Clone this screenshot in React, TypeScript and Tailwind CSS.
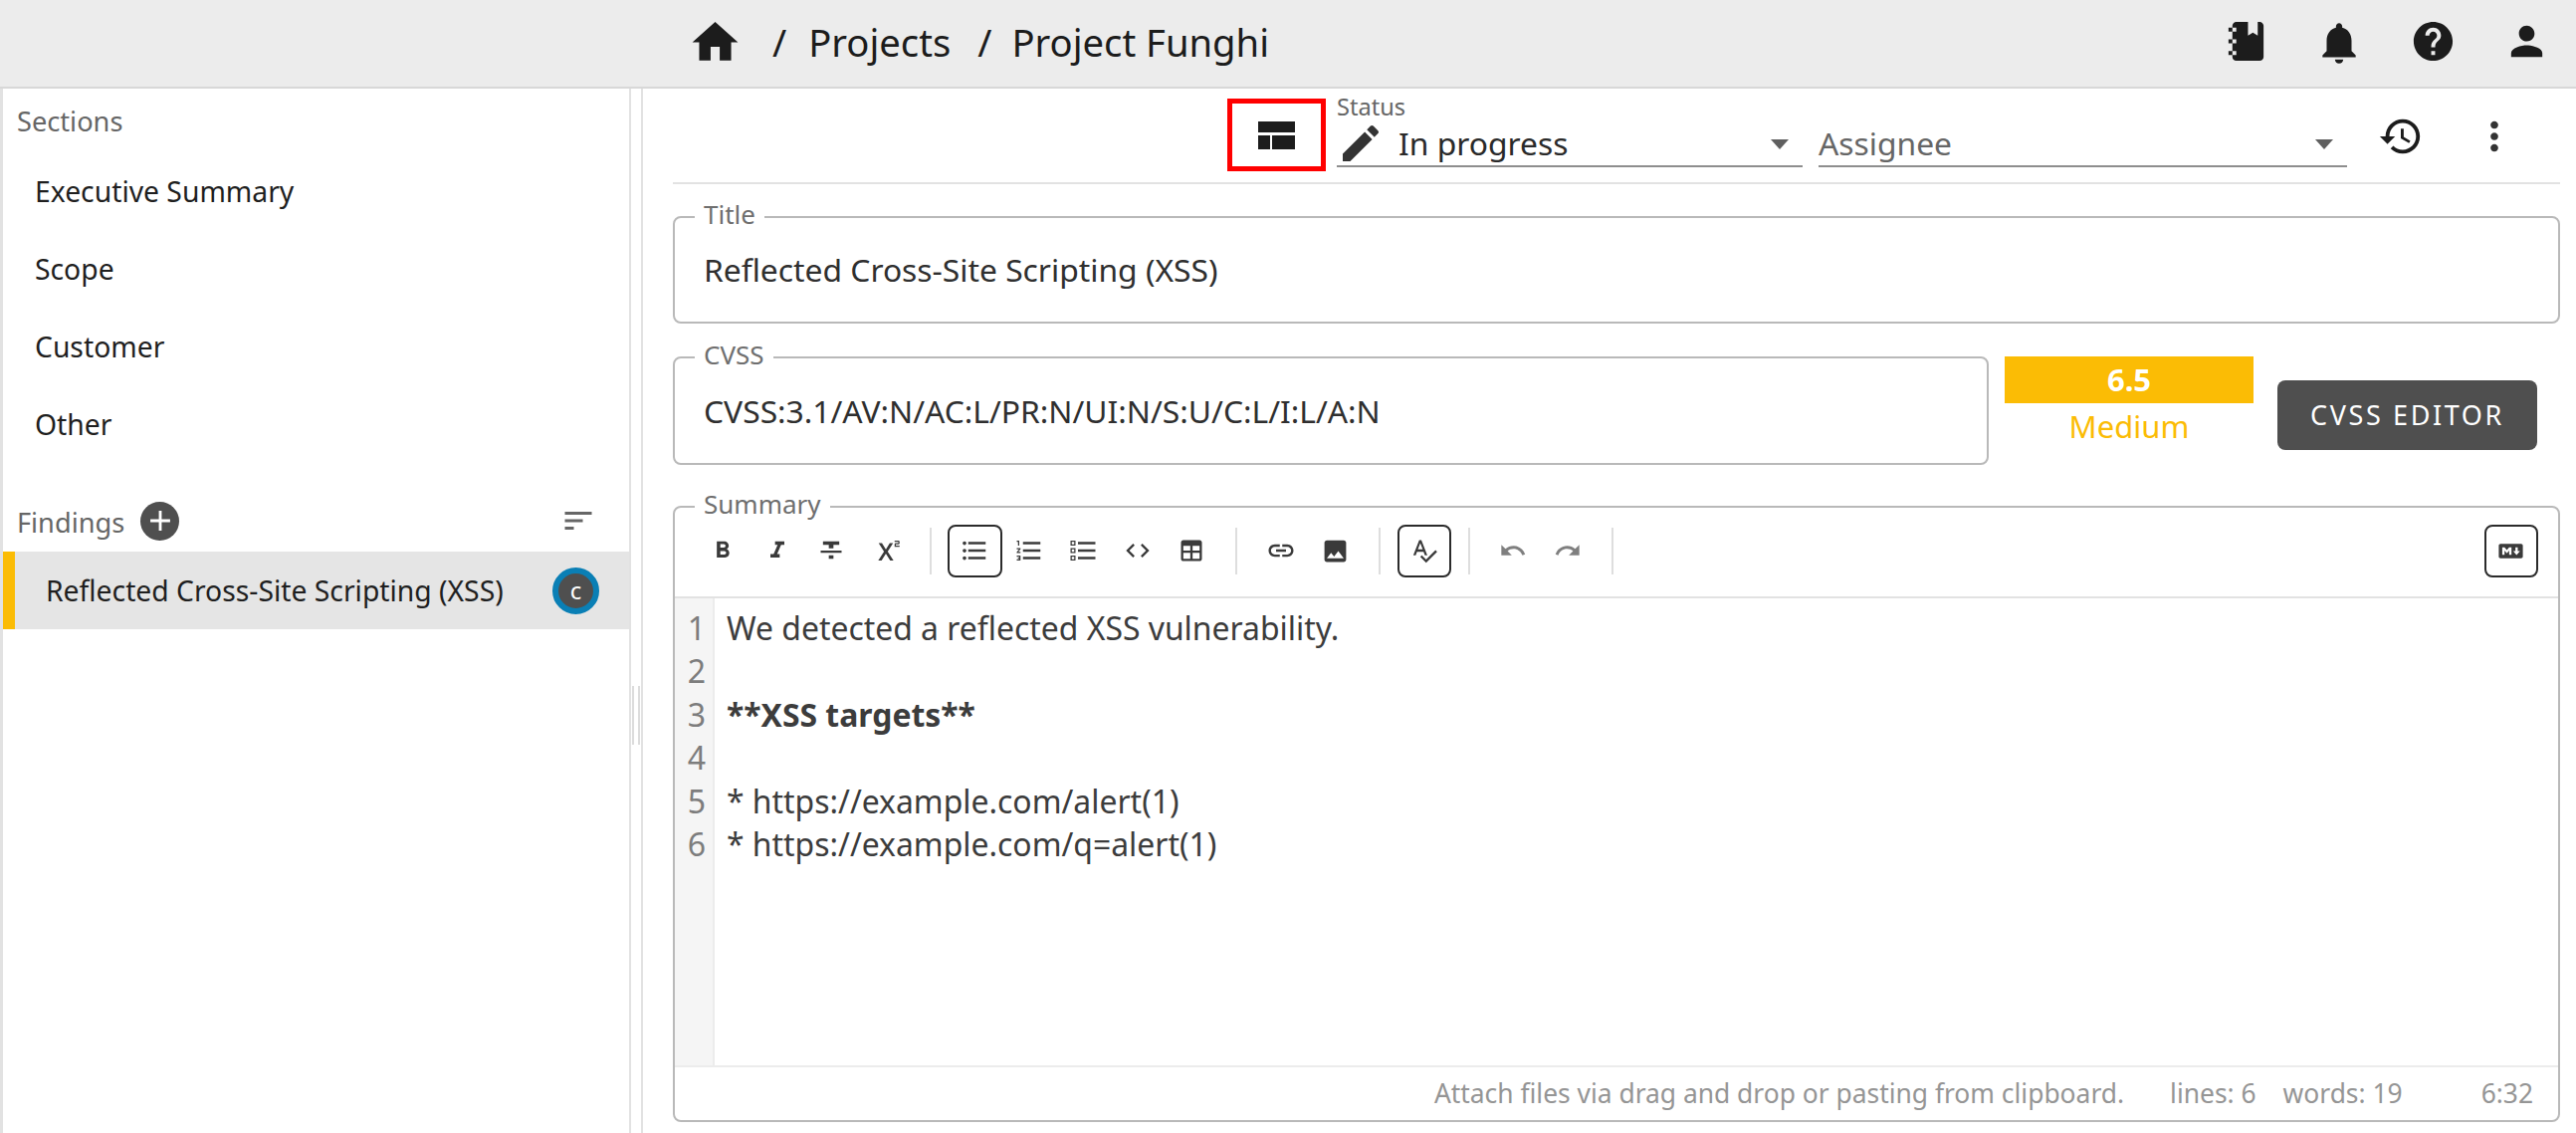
const ICONS = {
  home: "M10 20v-6h4v6h5v-8h3L12 3 2 12h3v8z",
  notebook:
    "M3,7V5H5V4C5,2.89 5.9,2 7,2H13V9L15.5,7.5L18,9V2H19C20.05,2 21,2.95 21,4V20C21,21.05 20.05,22 19,22H7C5.95,22 5,21.05 5,20V19H3V17H5V13H3V11H5V7H3M7,11H5V13H7V11M7,7V5H5V7H7M7,19V17H5V19H7Z",
  bell: "M12 22c1.1 0 2-.9 2-2h-4c0 1.1.9 2 2 2zm6-6v-5c0-3.07-1.63-5.64-4.5-6.32V4c0-.83-.67-1.5-1.5-1.5s-1.5.67-1.5 1.5v.68C7.64 5.36 6 7.92 6 11v5l-2 2v1h16v-1l-2-2z",
  help: "M12 2C6.48 2 2 6.48 2 12s4.48 10 10 10 10-4.48 10-10S17.52 2 12 2zm1 17h-2v-2h2v2zm2.07-7.75l-.9.92C13.45 12.9 13 13.5 13 15h-2v-.5c0-1.1.45-2.1 1.17-2.83l1.24-1.26c.37-.36.59-.86.59-1.41 0-1.1-.9-2-2-2s-2 .9-2 2H8c0-2.21 1.79-4 4-4s4 1.79 4 4c0 .88-.36 1.68-.93 2.25z",
  person:
    "M12 12c2.21 0 4-1.79 4-4s-1.79-4-4-4-4 1.79-4 4 1.79 4 4 4zm0 2c-2.67 0-8 1.34-8 4v2h16v-2c0-2.66-5.33-4-8-4z",
  history:
    "M13 3c-4.97 0-9 4.03-9 9H1l3.89 3.89.07.14L9 12H6c0-3.87 3.13-7 7-7s7 3.13 7 7-3.13 7-7 7c-1.93 0-3.68-.79-4.94-2.06l-1.42 1.42C8.27 19.99 10.51 21 13 21c4.97 0 9-4.03 9-9s-4.03-9-9-9zm-1 5v5l4.28 2.54.72-1.21-3.5-2.08V8H12z",
  more: "M12 8c1.1 0 2-.9 2-2s-.9-2-2-2-2 .9-2 2 .9 2 2 2zm0 2c-1.1 0-2 .9-2 2s.9 2 2 2 2-.9 2-2-.9-2-2-2zm0 6c-1.1 0-2 .9-2 2s.9 2 2 2 2-.9 2-2-.9-2-2-2z",
  edit: "M3 17.25V21h3.75L17.81 9.94l-3.75-3.75L3 17.25zM20.71 7.04c.39-.39.39-1.02 0-1.41l-2.34-2.34c-.39-.39-1.02-.39-1.41 0l-1.83 1.83 3.75 3.75 1.83-1.83z",
  plus: "M19 13h-6v6h-2v-6H5v-2h6V5h2v6h6v2z",
  sort: "M3 18h6v-2H3v2zM3 6v2h18V6H3zm0 7h12v-2H3v2z",
  bold: "M15.6 10.79c.97-.67 1.65-1.77 1.65-2.79 0-2.26-1.75-4-4-4H7v14h7.04c2.09 0 3.71-1.7 3.71-3.79 0-1.52-.86-2.82-2.15-3.42zM10 6.5h3c.83 0 1.5.67 1.5 1.5s-.67 1.5-1.5 1.5h-3v-3zm3.5 9H10v-3h3.5c.83 0 1.5.67 1.5 1.5s-.67 1.5-1.5 1.5z",
  italic: "M10 4v3h2.21l-3.42 8H6v3h8v-3h-2.21l3.42-8H18V4z",
  strike: "M10 19h4v-3h-4v3zM5 4v3h5v3h4V7h5V4H5zM3 14h18v-2H3v2z",
  sup: "M22 7h-2v1h3v1h-4V7c0-.55.45-1 1-1h2V5h-3V4h3c.55 0 1 .45 1 1v1c0 .55-.45 1-1 1zM5.88 20h2.66l3.4-5.42h.12l3.4 5.42h2.66l-4.65-7.27L17.81 6h-2.68l-3.07 4.99h-.12L8.85 6H6.19l4.32 6.73L5.88 20z",
  ul: "M4 10.5c-.83 0-1.5.67-1.5 1.5s.67 1.5 1.5 1.5 1.5-.67 1.5-1.5-.67-1.5-1.5-1.5zm0-6c-.83 0-1.5.67-1.5 1.5S3.17 7.5 4 7.5 5.5 6.83 5.5 6 4.83 4.5 4 4.5zm0 12c-.83 0-1.5.68-1.5 1.5s.68 1.5 1.5 1.5 1.5-.68 1.5-1.5-.67-1.5-1.5-1.5zM7 19h14v-2H7v2zm0-6h14v-2H7v2zm0-8v2h14V5H7z",
  ol: "M2 17h2v.5H3v1h1v.5H2v1h3v-4H2v1zm1-9h1V4H2v1h1v3zm-1 3h1.8L2 13.1v.9h3v-1H3.2L5 10.9V10H2v1zm5-6v2h14V5H7zm0 14h14v-2H7v2zm0-6h14v-2H7v2z",
  task: "M2 4h4v4H2V4zm1 1v2h2V5H3zM2 10h4v4H2v-4zm1 1v2h2v-2H3zM2 16h4v4H2v-4zm1 1v2h2v-2H3zM8 5h14v2H8V5zm0 6h14v2H8v-2zm0 6h14v2H8v-2z",
  code: "M9.4 16.6L4.8 12l4.6-4.6L8 6l-6 6 6 6 1.4-1.4zm5.2 0l4.6-4.6-4.6-4.6L16 6l6 6-6 6-1.4-1.4z",
  table:
    "M5 3h14c1.1 0 2 .9 2 2v14c0 1.1-.9 2-2 2H5c-1.1 0-2-.9-2-2V5c0-1.1.9-2 2-2zm0 5v4h6V8H5zm8 0v4h6V8h-6zm-8 6v5h6v-5H5zm8 0v5h6v-5h-6z",
  link: "M3.9 12c0-1.71 1.39-3.1 3.1-3.1h4V7H7c-2.76 0-5 2.24-5 5s2.24 5 5 5h4v-1.9H7c-1.71 0-3.1-1.39-3.1-3.1zM8 13h8v-2H8v2zm9-6h-4v1.9h4c1.71 0 3.1 1.39 3.1 3.1s-1.39 3.1-3.1 3.1h-4V17h4c2.76 0 5-2.24 5-5s-2.24-5-5-5z",
  image:
    "M21 19V5c0-1.1-.9-2-2-2H5c-1.1 0-2 .9-2 2v14c0 1.1.9 2 2 2h14c1.1 0 2-.9 2-2zM8.5 13.5l2.5 3.01L14.5 12l4.5 6H5l3.5-4.5z",
  spell:
    "M12.45 16h2.09L9.43 3H7.57L2.46 16h2.09l1.12-3h5.64l1.14 3zm-6.02-5L8.5 5.48 10.57 11H6.43zm15.16.59l-8.09 8.09L9.83 16l-1.41 1.41 5.09 5.09L23 13l-1.41-1.41z",
  undo: "M12.5 8c-2.65 0-5.05.99-6.9 2.6L2 7v9h9l-3.62-3.62c1.39-1.16 3.16-1.88 5.12-1.88 3.54 0 6.55 2.31 7.6 5.5l2.37-.78C21.08 11.03 17.15 8 12.5 8z",
  redo: "M18.4 10.6C16.55 8.99 14.15 8 11.5 8c-4.65 0-8.58 3.03-9.96 7.22L3.9 16c1.05-3.19 4.05-5.5 7.6-5.5 1.95 0 3.73.72 5.12 1.88L13 16h9V7l-3.6 3.6z",
  markdown:
    "M20.56 18H3.44C2.65 18 2 17.37 2 16.59V7.41C2 6.63 2.65 6 3.44 6h17.12c.79 0 1.44.63 1.44 1.41v9.18c0 .78-.65 1.41-1.44 1.41M6.81 15.19v-3.66l1.92 2.35 1.92-2.35v3.66h1.93V8.81h-1.93l-1.92 2.35-1.92-2.35H4.89v6.38h1.92M19.69 12h-1.92V8.81h-1.92V12h-1.93l2.89 3.28L19.69 12z",
};

function Icon({ name, className }: { name: keyof typeof ICONS; className: string }) {
  return (
    <svg viewBox="0 0 24 24" fill="currentColor" fillRule="evenodd" className={className}>
      <path d={ICONS[name]} />
    </svg>
  );
}

function ToolButton({
  name,
  boxed,
  size,
  muted,
}: {
  name: keyof typeof ICONS;
  boxed?: boolean;
  size?: string;
  muted?: boolean;
}) {
  const base = "flex h-[53px] w-[54.5px] shrink-0 items-center justify-center";
  const box = boxed ? " rounded-[8px] border-2 border-[#2b2b2b]" : "";
  const tone = muted ? " text-[#7f7f7f]" : " text-[#3a3a3a]";
  return (
    <div className={base + box + tone}>
      <Icon name={name} className={size ?? "h-[28px] w-[28px]"} />
    </div>
  );
}

function Separator() {
  return <div className="mx-[16.5px] h-[47px] w-[2px] shrink-0 bg-[#dedede]" />;
}

function Outlined({ label, className, children }: { label: string; className: string; children: React.ReactNode }) {
  return (
    <div className={`relative rounded-[8px] border-2 border-[#b9b9b9] ${className}`}>
      <span className="absolute left-[20px] top-[-19px] bg-white px-[9px] text-[26px] leading-[30px] text-[#6f6f6f]">
        {label}
      </span>
      {children}
    </div>
  );
}

function SelectField({ className, children }: { className: string; children: React.ReactNode }) {
  return (
    <div className={`relative flex h-[46px] items-center border-b-2 border-[#8e8e8e] ${className}`}>
      {children}
      <div className="absolute right-[14px] top-[18px] h-0 w-0 border-x-[9px] border-t-[10px] border-x-transparent border-t-[#5f5f5f]" />
    </div>
  );
}

function SectionRow({ label }: { label: string }) {
  return <div className="flex h-[78px] items-center pl-[32px] text-[28.3px] text-[#1f1f1f]">{label}</div>;
}

const LINES = [
  { text: "We detected a reflected XSS vulnerability." },
  { text: "" },
  { text: "**XSS targets**", bold: true },
  { text: "" },
  { text: "* https://example.com/alert(1)" },
  { text: "* https://example.com/q=alert(1)" },
];

export default function App() {
  return (
    <div className="flex h-[1138px] w-full flex-col overflow-hidden bg-white font-['Noto_Sans',sans-serif]">
      <header className="flex h-[89px] shrink-0 items-center border-b-2 border-[#d8d8d8] bg-[#ececec] pb-[2px] pl-[691px] pr-[3px] text-[38.2px] text-[#1c1c1c]">
        <Icon name="home" className="h-[55px] w-[55px]" />
        <span className="ml-[30px]">/</span>
        <span className="ml-[22px]">Projects</span>
        <span className="ml-[27px]">/</span>
        <span className="ml-[20px]">Project Funghi</span>
        <div className="ml-auto flex">
          <div className="flex w-[94px] justify-center"><Icon name="notebook" className="h-[47px] w-[47px]" /></div>
          <div className="flex w-[94px] justify-center"><Icon name="bell" className="h-[50px] w-[50px]" /></div>
          <div className="flex w-[94px] justify-center"><Icon name="help" className="h-[47px] w-[47px]" /></div>
          <div className="flex w-[94px] justify-center"><Icon name="person" className="h-[47px] w-[47px]" /></div>
        </div>
      </header>

      <div className="flex min-h-0 flex-1">
        <aside className="w-[634px] shrink-0 border-x-[3px] border-r-2 border-l-[#e2e2e2] border-r-[#e2e2e2]">
          <div className="flex h-[64px] items-center pl-[14px] pt-[2px] text-[27.2px] text-[#666666]">Sections</div>
          <SectionRow label="Executive Summary" />
          <SectionRow label="Scope" />
          <SectionRow label="Customer" />
          <SectionRow label="Other" />
          <div className="mt-[27px] flex h-[62px] items-center pl-[14px] pr-[33px] text-[#666666]">
            <span className="mt-[4px] text-[27.2px]">Findings</span>
            <div className="ml-[16px] flex h-[39px] w-[39px] items-center justify-center rounded-full bg-[#4f4f4f] text-white">
              <Icon name="plus" className="h-[34px] w-[34px]" />
            </div>
            <Icon name="sort" className="ml-auto h-[36px] w-[36px]" />
          </div>
          <div className="flex h-[78px] items-center border-l-[12px] border-[#fbbc05] bg-[#e5e5e5] pl-[31px] pr-[30px] text-[28.3px] text-[#1f1f1f]">
            <span>Reflected Cross-Site Scripting (XSS)</span>
            <div className="ml-auto flex h-[47px] w-[47px] items-center justify-center rounded-full border-[6px] border-[#0a7fb5] bg-[#4f4f4f] text-[24px] leading-none text-white">
              c
            </div>
          </div>
        </aside>

        <div className="flex w-[10px] shrink-0 items-center justify-center gap-[4px]">
          <div className="mt-[209px] h-[59px] w-[2px] bg-[#dcdcdc]" />
          <div className="mt-[209px] h-[59px] w-[2px] bg-[#dcdcdc]" />
        </div>

        <main className="min-w-0 flex-1 border-l-2 border-[#e2e2e2] pl-[30px] pr-[16px]">
          <div className="flex h-[96px] items-start border-b-2 border-[#e2e2e2]">
            <div className="ml-[557px] mt-[10px] flex h-[73px] w-[99px] shrink-0 items-center justify-center border-[5px] border-[#ff0000] text-[#1c1c1c]">
              <svg viewBox="0 0 37 28" fill="currentColor" className="h-[28px] w-[37px]">
                <rect width="37" height="11" />
                <rect y="14" width="12" height="14" />
                <rect x="14" y="14" width="23" height="14" />
              </svg>
            </div>
            <div className="ml-[11px] w-[468px] shrink-0">
              <div className="h-[33px] pt-[4px] text-[23.6px] leading-[28px] text-[#666666]">Status</div>
              <SelectField className="mt-0">
                <Icon name="edit" className="h-[48px] w-[48px] shrink-0 text-[#333333]" />
                <span className="ml-[14px] text-[31.8px] text-[#2a2a2a]">In progress</span>
              </SelectField>
            </div>
            <div className="ml-[16px] mt-[33px] w-[531px] shrink-0">
              <SelectField className="">
                <span className="text-[31.8px] text-[#666666]">Assignee</span>
              </SelectField>
            </div>
            <Icon name="history" className="ml-[31px] mt-[25px] h-[46px] w-[46px] shrink-0 text-[#1c1c1c]" />
            <Icon name="more" className="ml-[48px] mt-[25px] h-[46px] w-[46px] shrink-0 text-[#333333]" />
          </div>

          <Outlined label="Title" className="mt-[32px] flex h-[108px] items-center pl-[29px]">
            <span className="text-[31.8px] text-[#2f2f2f]">Reflected Cross-Site Scripting (XSS)</span>
          </Outlined>

          <div className="mt-[33px] flex h-[109px] items-start">
            <Outlined label="CVSS" className="flex h-[109px] w-[1322px] shrink-0 items-center pl-[29px]">
              <span className="text-[31.8px] text-[#2f2f2f]">CVSS:3.1/AV:N/AC:L/PR:N/UI:N/S:U/C:L/I:L/A:N</span>
            </Outlined>
            <div className="ml-[16px] w-[250px] shrink-0 text-center">
              <div className="flex h-[47px] items-center justify-center bg-[#fbbc05] text-[31px] font-bold text-white">6.5</div>
              <div className="mt-[1px] text-[31px] leading-[44px] text-[#fbbc05]">Medium</div>
            </div>
            <div className="ml-[24px] mt-[24px] flex h-[70px] w-[261px] shrink-0 items-center justify-center rounded-[8px] bg-[#4f4f4f] text-[27px] tracking-[2.6px] text-white">
              CVSS EDITOR
            </div>
          </div>

          <Outlined label="Summary" className="mt-[41px] flex h-[619px] flex-col">
            <div className="flex h-[91px] shrink-0 items-center border-b-2 border-[#e2e2e2] pb-[3px] pl-[21px] pr-[20px]">
              <ToolButton name="bold" />
              <ToolButton name="italic" />
              <ToolButton name="strike" />
              <ToolButton name="sup" size="h-[30px] w-[30px]" />
              <Separator />
              <ToolButton name="ul" boxed size="h-[30px] w-[30px]" />
              <ToolButton name="ol" size="h-[30px] w-[30px]" />
              <ToolButton name="task" size="h-[30px] w-[30px]" />
              <ToolButton name="code" />
              <ToolButton name="table" />
              <Separator />
              <ToolButton name="link" size="h-[30px] w-[30px]" />
              <ToolButton name="image" size="h-[29px] w-[29px]" />
              <Separator />
              <ToolButton name="spell" boxed />
              <Separator />
              <ToolButton name="undo" muted />
              <ToolButton name="redo" muted />
              <Separator />
              <div className="ml-auto">
                <ToolButton name="markdown" boxed size="h-[29px] w-[29px]" />
              </div>
            </div>
            <div className="flex min-h-0 flex-1">
              <div className="w-[40px] shrink-0 border-r-2 border-[#ececec] bg-[#f5f5f5] pr-[7px] pt-[8px] text-right text-[32px] leading-[43.4px] text-[#7d7d7d]">
                {LINES.map((_, i) => (
                  <div key={i}>{i + 1}</div>
                ))}
              </div>
              <div className="pl-[12px] pt-[8px] text-[31.9px] leading-[43.4px] text-[#3c3c3c]">
                {LINES.map((line, i) => (
                  <div key={i} className={line.bold ? "h-[43.4px] font-bold" : "h-[43.4px]"}>
                    {line.text}
                  </div>
                ))}
              </div>
            </div>
            <div className="flex h-[55px] shrink-0 items-center justify-end border-t-2 border-[#ececec] pr-[25px] text-[26.4px] text-[#959595]">
              <span>Attach files via drag and drop or pasting from clipboard.</span>
              <span className="ml-[46px]">lines: 6</span>
              <span className="ml-[27px]">words: 19</span>
              <span className="ml-[79px]">6:32</span>
            </div>
          </Outlined>
        </main>
      </div>
    </div>
  );
}
